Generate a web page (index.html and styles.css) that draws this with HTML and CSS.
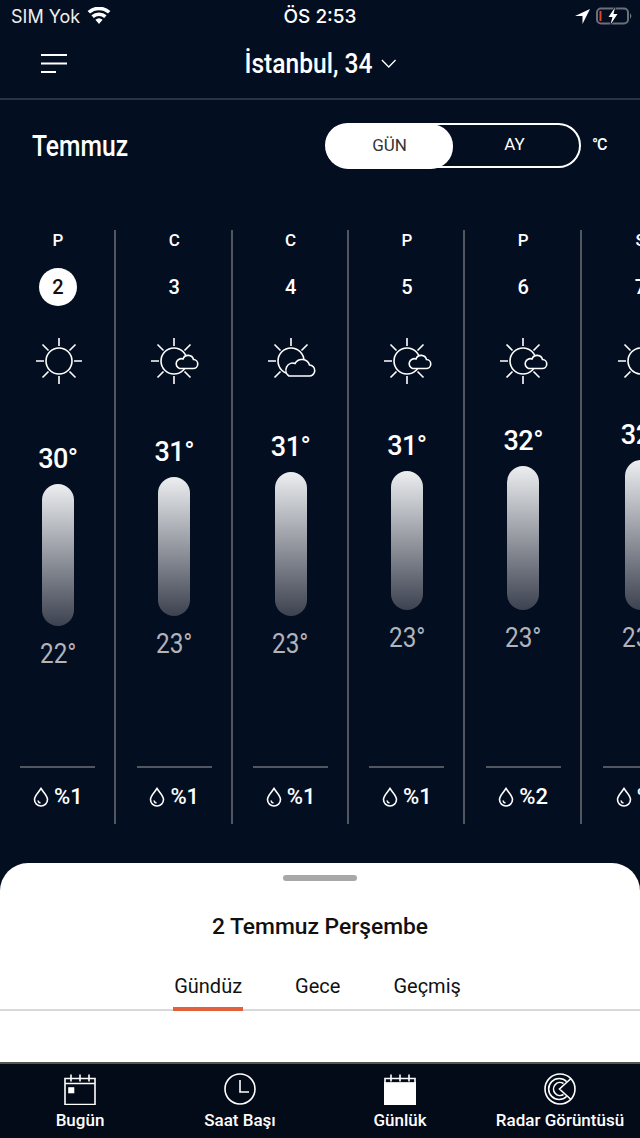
FILE: index.html
```html
<!DOCTYPE html>
<html lang="tr">
<head>
  <meta charset="UTF-8" />
  <meta name="viewport" content="width=device-width, initial-scale=1.0" />
  <title>Temmuz</title>
  <link rel="stylesheet" href="styles.css">
</head>
<body>
  <svg class="defs" width="0" height="0">
    <symbol id="sun" viewBox="0 0 48 48">
      <circle cx="24" cy="24" r="13"/>
      <path d="M24 1v8M24 39v8M1 24h8M39 24h8M7.500 7.500l6 6M40.500 7.500l-6 6M7.500 40.500l6-6M40.500 40.500l-6-6"/>
    </symbol>
    <symbol id="sun-cloud" viewBox="0 0 50 48">
      <circle cx="24" cy="24" r="13"/>
      <path d="M24 1v8M24 39v8M1 24h8M7.500 7.500l6 6M40.500 7.500l-6 6M7.500 40.500l6-6M40.500 40.500l-6-6"/>
      <path class="cloud" d="M29.500 31.500h13.500a4.500 4.500 0 0 0 .5-9a5.500 5.500 0 0 0-10.500-.5a4.800 4.800 0 0 0-3.500 9.500z"/>
    </symbol>
    <symbol id="cloud-sun" viewBox="0 0 50 48">
      <circle cx="24" cy="24" r="13"/>
      <path d="M24 1v8M1 24h8M7.500 7.500l6 6M40.500 7.500l-6 6M7.500 40.500l6-6"/>
      <path class="cloud" d="M22 39h20a5.500 5.500 0 0 0 .5-11a8 8 0 0 0-14.500-1.500a7 7 0 0 0-6 12.500z"/>
    </symbol>
    <symbol id="drop" viewBox="0 0 16 20">
      <path d="M8 1.500c-2.500 4-6.500 7-6.500 11a6.500 6.500 0 0 0 13 0c0-4-4-7-6.500-11z"/>
      <path d="M5 13.500a3 3 0 0 0 2.500 2.500"/>
    </symbol>
  </svg>

  <div class="screen">
    <div class="status-bar">
      <div class="status-left">
        <span>SIM Yok</span>
        <svg class="wifi" width="24" height="18" viewBox="0 0 24 18"><path d="M12 17l-3.600-4.200a5.500 5.500 0 0 1 7.200 0zM6.800 11L4.400 8.300a11.500 11.500 0 0 1 15.200 0L17.200 11a8 8 0 0 0-10.400 0zM3 6.600L.6 4a17 17 0 0 1 22.800 0L21 6.600a13.500 13.500 0 0 0-18 0z"/></svg>
      </div>
      <div class="status-time">ÖS 2:53</div>
      <div class="status-right">
        <svg width="15" height="15" viewBox="0 0 14 14"><path d="M14 0L0 6.500h7V14z" fill="#fff"/></svg>
        <svg width="36" height="18" viewBox="0 0 36 18">
          <rect x="1" y="1.500" width="31" height="15" rx="4" fill="none" stroke="#6b6f78" stroke-width="2"/>
          <rect x="3.500" y="4" width="2" height="10" fill="#e0452f"/>
          <path d="M34 6.500c1.800.5 1.800 4.500 0 5z" fill="#6b6f78"/>
          <path d="M19 .5l-6.500 9.500h4l-2 7.500 7-10.500h-4z" fill="#fff" stroke="#040e21" stroke-width="1.500" paint-order="stroke"/>
        </svg>
      </div>
    </div>

    <header class="top-bar">
      <svg class="menu-icon" width="28" height="22" viewBox="0 0 28 22"><path d="M1 2h26M1 10.500h26M1 19h15"/></svg>
      <div class="city">İstanbul, 34
        <svg width="17" height="10" viewBox="0 0 17 10"><path d="M1 1l7.500 7 7.500-7"/></svg>
      </div>
    </header>

    <div class="month-row">
      <div class="month">Temmuz</div>
      <div class="switch">
        <div class="switch-item active">GÜN</div>
        <div class="switch-item">AY</div>
      </div>
      <div class="unit">°C</div>
    </div>

    <div class="days">
      <div class="day-col">
        <div class="day-name">P</div>
        <div class="day-num today">2</div>
        <svg class="wx"><use href="#sun"/></svg>
        <div class="range" style="padding-top:27px">
          <div class="high">30°</div>
          <div class="bar" style="height:142px"></div>
          <div class="low">22°</div>
        </div>
        <div class="rain"><svg class="drop"><use href="#drop"/></svg>%1</div>
      </div>
      <div class="day-col">
        <div class="day-name">C</div>
        <div class="day-num">3</div>
        <svg class="wx"><use href="#sun-cloud"/></svg>
        <div class="range" style="padding-top:20px">
          <div class="high">31°</div>
          <div class="bar" style="height:139px"></div>
          <div class="low">23°</div>
        </div>
        <div class="rain"><svg class="drop"><use href="#drop"/></svg>%1</div>
      </div>
      <div class="day-col">
        <div class="day-name">C</div>
        <div class="day-num">4</div>
        <svg class="wx"><use href="#cloud-sun"/></svg>
        <div class="range" style="padding-top:15px">
          <div class="high">31°</div>
          <div class="bar" style="height:144px"></div>
          <div class="low">23°</div>
        </div>
        <div class="rain"><svg class="drop"><use href="#drop"/></svg>%1</div>
      </div>
      <div class="day-col">
        <div class="day-name">P</div>
        <div class="day-num">5</div>
        <svg class="wx"><use href="#sun-cloud"/></svg>
        <div class="range" style="padding-top:14px">
          <div class="high">31°</div>
          <div class="bar" style="height:139px"></div>
          <div class="low">23°</div>
        </div>
        <div class="rain"><svg class="drop"><use href="#drop"/></svg>%1</div>
      </div>
      <div class="day-col">
        <div class="day-name">P</div>
        <div class="day-num">6</div>
        <svg class="wx"><use href="#sun-cloud"/></svg>
        <div class="range" style="padding-top:9px">
          <div class="high">32°</div>
          <div class="bar" style="height:144px"></div>
          <div class="low">23°</div>
        </div>
        <div class="rain"><svg class="drop"><use href="#drop"/></svg>%2</div>
      </div>
      <div class="day-col">
        <div class="day-name">S</div>
        <div class="day-num">7</div>
        <svg class="wx"><use href="#sun-cloud"/></svg>
        <div class="range" style="padding-top:3px">
          <div class="high">32°</div>
          <div class="bar" style="height:150px"></div>
          <div class="low">23°</div>
        </div>
        <div class="rain"><svg class="drop"><use href="#drop"/></svg>%1</div>
      </div>
    </div>

    <section class="sheet">
      <div class="handle"></div>
      <h2 class="sheet-title">2 Temmuz Perşembe</h2>
      <div class="tabs">
        <div class="tab active">Gündüz</div>
        <div class="tab">Gece</div>
        <div class="tab">Geçmiş</div>
      </div>
    </section>

    <nav class="tab-bar">
      <div class="nav-item">
        <svg width="32" height="32" viewBox="0 0 32 32"><path d="M1 5.500h30v26H1zM1 10.500h30M7 1.500v7M16 1.500v7M25 1.500v7"/><rect class="solid" x="5" y="15" width="4.500" height="4.500"/></svg>
        <span>Bugün</span>
      </div>
      <div class="nav-item">
        <svg width="32" height="32" viewBox="0 0 32 32"><circle cx="16" cy="16" r="15"/><path d="M16 7v12h9"/></svg>
        <span>Saat Başı</span>
      </div>
      <div class="nav-item">
        <svg width="32" height="32" viewBox="0 0 32 32"><path d="M1 5.500h30v5H1zM7 1.500v7M16 1.500v7M25 1.500v7"/><rect class="solid" x=".5" y="10" width="31" height="22"/></svg>
        <span>Günlük</span>
      </div>
      <div class="nav-item">
        <svg width="32" height="32" viewBox="0 0 32 32"><circle cx="16" cy="16" r="15"/><path d="M22.500 8.500a10.500 10.500 0 1 0 0 15M27 5.500L15.500 16 27 26.500M19.500 10.500a6.500 6.500 0 1 0 0 11"/></svg>
        <span>Radar Görüntüsü</span>
      </div>
    </nav>
  </div>
</body>
</html>
```

FILE: styles.css
```css
* { box-sizing: border-box; }
html, body { margin: 0; padding: 0; }
body { background: #040e21; font-family: 'Roboto', 'Liberation Sans', sans-serif; color: #fff; }
.defs { position: absolute; }
symbol circle, symbol path { fill: none; stroke: #fff; stroke-width: 1.6; stroke-linecap: butt; }
symbol .cloud { fill: #040e21; }

.screen { width: 640px; height: 1138px; display: flex; flex-direction: column; overflow: hidden; }

.status-bar { height: 30px; padding: 2px 8px 0 11px; display: flex; align-items: center; justify-content: space-between; font-family: 'Inter', sans-serif; font-size: 18px; position: relative; }
.status-left { display: flex; align-items: center; gap: 7px; color: #eee; }
.wifi { margin-top: -1px; fill: #fff; }
.status-time { position: absolute; left: 0; right: 0; text-align: center; font-weight: 500; font-size: 19px; }
.status-right { display: flex; align-items: center; gap: 6px; }

.top-bar { height: 70px; display: flex; align-items: center; justify-content: center; border-bottom: 2px solid #2a3343; position: relative; }
.menu-icon { position: absolute; left: 40px; top: 23px; }
.menu-icon path { fill: none; stroke: #fff; stroke-width: 2; }
.city { font-size: 27px; font-weight: 500; transform: scaleX(.91); display: flex; align-items: center; gap: 9px; }
.city svg path { fill: none; stroke: #fff; stroke-width: 1.500; }

.month-row { height: 88px; padding: 3px 32px 0 32px; display: flex; align-items: center; }
.month { flex: 1; font-size: 29px; font-weight: 500; transform: scaleX(.85); transform-origin: left center; }
.switch { width: 256px; height: 45px; border: 2px solid #fff; border-radius: 23px; display: flex; font-size: 17px; transform: translateX(-11px); }
.switch-item { width: 125px; display: flex; align-items: center; justify-content: center; padding-bottom: 3px; }
.switch-item.active { background: #fff; color: #333; border-radius: 22px; margin: -1px; width: 127px; height: 45px; }
.unit { width: 17px; margin-right: -1px; margin-top: -2px; font-size: 16px; font-weight: 500; letter-spacing: -1px; }

.days { display: flex; height: 594px; margin-top: 42px; flex: none; }
.day-col { flex: none; width: 116.330px; height: 100%; border-right: 2px solid #52565f; padding-left: 1.500px; display: flex; flex-direction: column; align-items: center; }
.day-col:last-child { border-right: none; }
.day-name { font-size: 17px; line-height: 20px; font-weight: 500; }
.day-num { width: 38px; height: 38px; border-radius: 50%; margin-top: 18px; font-size: 20px; font-weight: 500; display: flex; align-items: center; justify-content: center; }
.day-num.today { background: #fff; color: #111; }
.wx { width: 50px; height: 48px; margin-top: 31px; margin-left: 2px; flex: none; }
.range { height: 323px; margin-top: 31px; width: 100%; display: flex; flex-direction: column; align-items: center; }
.high { font-size: 27px; line-height: 32px; font-weight: 500; letter-spacing: -.5px; }
.bar { width: 32px; flex: none; border-radius: 16px; margin-top: 9px; background: linear-gradient(#eceef0, #3d4250); }
.low { font-size: 27px; line-height: 32px; margin-top: 12px; color: #b1b4ba; transform: scaleX(.9); }
.rain { width: 75px; margin-top: auto; height: 58px; border-top: 2px solid #52565f; display: flex; align-items: center; justify-content: center; gap: 5px; font-size: 22px; font-weight: 500; }
.drop { width: 16px; height: 20px; margin-top: 2px; }

.sheet { margin-top: 39px; height: 199px; flex: none; background: #fff; border-radius: 28px 28px 0 0; color: #111; display: flex; flex-direction: column; align-items: center; }
.handle { width: 74px; height: 6px; border-radius: 3px; background: #a8a8a8; margin-top: 12px; flex: none; }
.sheet-title { margin: 32px 0 0; font-size: 22.800px; line-height: 28px; font-weight: 500; }
.tabs { margin-top: 21px; width: 100%; height: 49px; display: flex; justify-content: center; border-bottom: 2px solid #d9d9d9; gap: 51px; padding-right: 5px; }
.tab { font-size: 20px; line-height: 30px; height: 49px; padding: 9px 1px 0; }
.tab.active { border-bottom: 4px solid #e2603a; }

.tab-bar { flex: none; height: 76px; background: #030a18; border-top: 2px solid #555; display: flex; }
.nav-item { display: flex; flex-direction: column; align-items: center; font-size: 17px; font-weight: 500; padding-top: 9px; flex: 1; gap: 5px; }
.nav-item svg * { fill: none; stroke: #fff; stroke-width: 1.600; }
.nav-item svg .solid { fill: #fff; }
```
